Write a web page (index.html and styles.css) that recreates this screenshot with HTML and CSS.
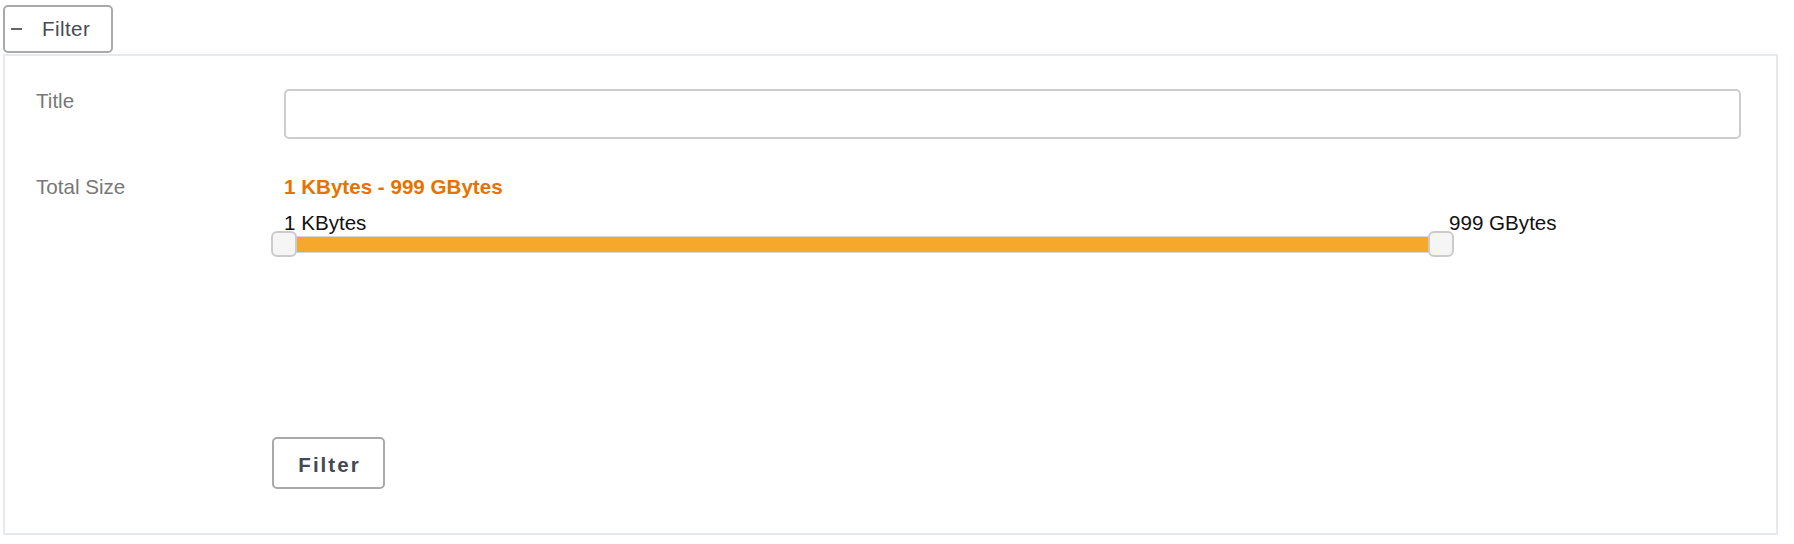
FILE: index.html
```html
<!DOCTYPE html>
<html lang="en">
<head>
    <meta charset="UTF-8">
    <meta name="viewport" content="width=device-width, initial-scale=1.0">
    <title>Filter</title>
    <link rel="stylesheet" href="styles.css">
</head>
<body>

    <div class="wrapper">
        <button class="toggle-btn" type="button"><span class="minus"></span>Filter</button>

        <form class="filter-panel" onsubmit="return false;">
            <label class="field-label" for="title">Title</label>
            <input class="text-input" type="text" id="title">

            <div class="field-label">Total Size</div>
            <div class="size-field">
                <div class="size-range">1 KBytes - 999 GBytes</div>
                <div class="slider">
                    <span class="slider-label label-min">1 KBytes</span>
                    <span class="slider-label label-max">999 GBytes</span>
                    <div class="track">
                        <span class="handle handle-min"></span>
                        <span class="handle handle-max"></span>
                    </div>
                </div>
            </div>

            <div class="actions">
                <button class="submit-btn" type="submit">Filter</button>
            </div>
        </form>
    </div>

</body>
</html>
```

FILE: styles.css
```css
body {
    margin: 0;
    padding: 0;
    font-family: "Liberation Sans", Arial, sans-serif;
    font-size: 20.6px;
    line-height: 24px;
    background-color: #fff;
    color: #111;
}
.wrapper {
    padding: 5px 16px 0 3px;
}
.toggle-btn {
    display: flex;
    align-items: center;
    height: 48px;
    width: 110px;
    padding: 0 0 0 6px;
    margin: 0 0 1px 0;
    background: #fff;
    border: 2px solid #a9a9a9;
    border-radius: 5px;
    font-family: inherit;
    font-size: 20.6px;
    letter-spacing: 0.4px;
    color: #474a52;
    cursor: pointer;
}
.minus {
    display: inline-block;
    width: 11px;
    height: 2px;
    background-color: #666;
    margin-right: 20px;
}
.filter-panel {
    display: grid;
    grid-template-columns: 248px 1fr;
    row-gap: 36px;
    padding: 33px 35px 44px 31px;
    border: 2px solid #e6e9ef;
}
.field-label {
    color: #777;
}
.text-input {
    height: 50px;
    box-sizing: border-box;
    border: 2px solid #cdcdcd;
    border-radius: 5px;
    font-family: inherit;
    font-size: 20px;
    padding: 0 10px;
}
.size-range {
    color: #e67300;
    font-weight: bold;
}
.slider {
    position: relative;
    width: 1157px;
    margin-top: 12px;
    padding-top: 25px;
}
.slider-label {
    position: absolute;
    top: 0;
    white-space: nowrap;
}
.label-min {
    left: 0;
}
.label-max {
    left: calc(100% + 8px);
}
.track {
    position: relative;
    height: 17px;
    box-sizing: border-box;
    border: 1px solid #d6d6d6;
    background-color: #f6a82c;
}
.handle {
    position: absolute;
    top: -6px;
    width: 26px;
    height: 26px;
    box-sizing: border-box;
    background-color: #f5f5f5;
    border: 2px solid #cbcbcb;
    border-radius: 6px;
}
.handle-min {
    left: -14px;
}
.handle-max {
    right: -14px;
}
.actions {
    grid-column: 2;
    margin-top: 148px;
    margin-left: -12px;
}
.submit-btn {
    width: 113px;
    height: 52px;
    padding: 3px 0 0 0;
    background: #fff;
    border: 2px solid #a9a9a9;
    border-radius: 5px;
    font-family: inherit;
    font-size: 20.6px;
    font-weight: bold;
    letter-spacing: 2px;
    text-indent: 2px;
    color: #454954;
    cursor: pointer;
}
```
